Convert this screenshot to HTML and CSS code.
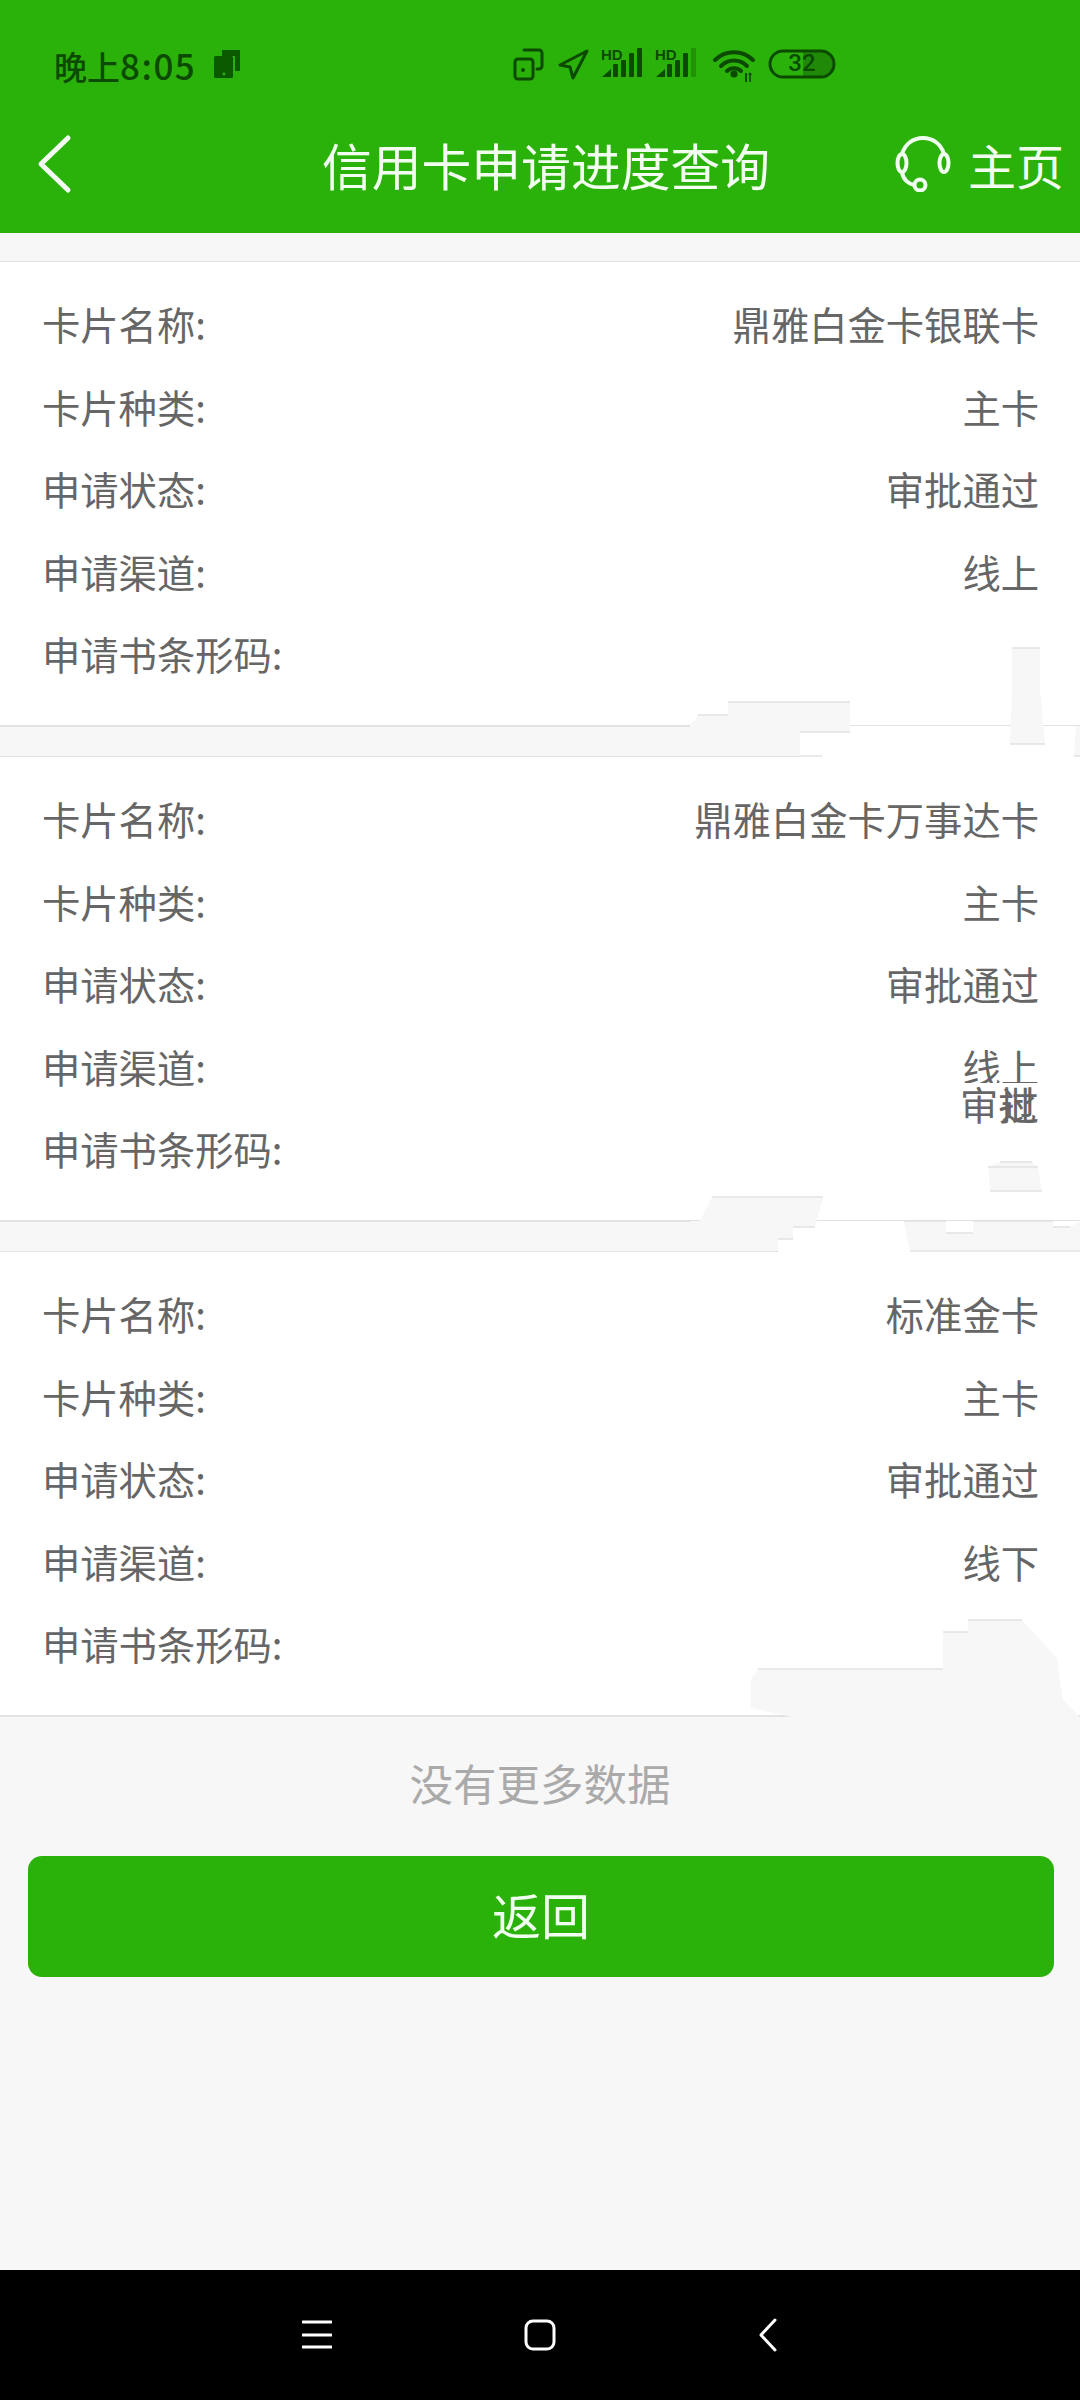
FILE: index.html
```html
<!DOCTYPE html>
<html lang="zh-CN">
    <head>
        <meta charset="UTF-8">
        <meta name="viewport" content="width=device-width, initial-scale=1.0">
        <title>信用卡申请进度查询</title>
        <link rel="stylesheet" href="styles.css">
    </head>
    <body>
        <div class="page">
            <header class="top">
                <div class="status">
                    <span class="time">晚上<span class="digits">8:05</span></span>
                    <svg class="status-left" width="28" height="30" viewBox="0 0 28 30">
                        <path d="M9 1h18v21h-5V7H9z" fill="#0b5a00"/>
                        <rect x="1" y="7" width="19" height="22" rx="1.5" fill="#0b5a00"/>
                        <circle cx="11" cy="25" r="1.4" fill="#2bb20a"/>
                    </svg>
                    <svg class="status-right" width="326" height="36" viewBox="512 46 326 36">
                        <g fill="none" stroke="#0b4a00" stroke-width="3" stroke-linejoin="round" stroke-linecap="round">
                            <rect x="514" y="59" width="18" height="20" rx="3"/>
                            <path d="M523 50h15a3 3 0 0 1 3 3v13a3 3 0 0 1-3 3h-2"/>
                            <path d="M586 51L559 65l10 2 3 11z"/>
                        </g>
                        <circle cx="522" cy="70" r="2" fill="#0b4a00"/>
                        <g fill="#0b4a00">
                            <text class="hd" x="600" y="60">HD</text>
                            <path d="M601 77l9-8v8z"/>
                            <rect x="612" y="64" width="5" height="13" rx="1"/>
                            <rect x="620" y="60" width="5" height="17" rx="1"/>
                            <rect x="628" y="53" width="5" height="24" rx="1"/>
                            <rect x="636" y="48" width="5" height="29" rx="1"/>
                            <text class="hd" x="654" y="60">HD</text>
                            <path d="M655 77l9-8v8z"/>
                            <rect x="666" y="64" width="5" height="13" rx="1"/>
                            <rect x="674" y="60" width="5" height="17" rx="1"/>
                            <rect x="682" y="53" width="5" height="24" rx="1"/>
                            <rect x="690" y="48" width="5" height="29" rx="1" opacity="0.3"/>
                            <circle cx="733" cy="74" r="3.6"/>
                            <path d="M744 73v9h2v-9zM749 72l-2 3h1.200v7h1.600v-7H751z"/>
                        </g>
                        <g fill="none" stroke="#0b4a00" stroke-width="4" stroke-linecap="round">
                            <path d="M714 60a27 27 0 0 1 38 0"/>
                            <path d="M720 66a18 18 0 0 1 26 0"/>
                            <path d="M726 71a10 10 0 0 1 14 0"/>
                        </g>
                        <path d="M802 52h18a12 12 0 0 1 0 24h-18z" fill="#1f8a08"/>
                        <rect x="769" y="51" width="64" height="26" rx="13" fill="none" stroke="#0b4a00" stroke-width="3"/>
                        <text class="batt" x="801" y="71">32</text>
                    </svg>
                </div>
                <div class="bar">
                    <svg class="back" width="38" height="60" viewBox="0 0 38 60">
                        <path d="M33 4L6 30l27 26" fill="none" stroke="#fff" stroke-width="5" stroke-linecap="round" stroke-linejoin="round" opacity="0.95"/>
                    </svg>
                    <h1 class="title">信用卡申请进度查询</h1>
                    <div class="home">
                        <svg width="56" height="56" viewBox="0 0 56 56">
                            <g fill="none" stroke="#f0fff0" stroke-width="4" stroke-linecap="round">
                                <path d="M7 18C10 8 18 2 28 2s18 6 21 16"/>
                                <ellipse cx="7" cy="27" rx="4.500" ry="9"/>
                                <ellipse cx="49" cy="27" rx="4.500" ry="9"/>
                                <path d="M7 36c1 8 7 12 12 13"/>
                                <circle cx="25" cy="49" r="5.500"/>
                            </g>
                        </svg>
                        <span>主页</span>
                    </div>
                </div>
            </header>

            <main class="list">
                <section class="card">
                    <div class="row"><span>卡片名称:</span><span>鼎雅白金卡银联卡</span></div>
                    <div class="row"><span>卡片种类:</span><span>主卡</span></div>
                    <div class="row"><span>申请状态:</span><span>审批通过</span></div>
                    <div class="row"><span>申请渠道:</span><span>线上</span></div>
                    <div class="row"><span>申请书条形码:</span></div>
                </section>
                <section class="card">
                    <div class="row"><span>卡片名称:</span><span>鼎雅白金卡万事达卡</span></div>
                    <div class="row"><span>卡片种类:</span><span>主卡</span></div>
                    <div class="row"><span>申请状态:</span><span>审批通过</span></div>
                    <div class="row"><span>申请渠道:</span><span>线上</span></div>
                    <div class="row"><span>申请书条形码:</span></div>
                    <div class="stray">审<span>批</span><span class="over">过</span></div>
                </section>
                <section class="card">
                    <div class="row"><span>卡片名称:</span><span>标准金卡</span></div>
                    <div class="row"><span>卡片种类:</span><span>主卡</span></div>
                    <div class="row"><span>申请状态:</span><span>审批通过</span></div>
                    <div class="row"><span>申请渠道:</span><span>线下</span></div>
                    <div class="row"><span>申请书条形码:</span></div>
                </section>
                <p class="nomore">没有更多数据</p>
                <button class="btn-back" type="button">返回</button>
            </main>

            <nav class="keys">
                <svg width="30" height="30" viewBox="0 0 30 30">
                    <path d="M1 2h28M1 15h28M1 27h28" stroke="#fff" stroke-width="3" stroke-linecap="round"/>
                </svg>
                <svg class="key-home" width="32" height="32" viewBox="0 0 32 32">
                    <rect x="2" y="2" width="28" height="28" rx="7" fill="none" stroke="#fff" stroke-width="3"/>
                </svg>
                <svg width="20" height="34" viewBox="0 0 20 34">
                    <path d="M17 2L3 17l14 15" fill="none" stroke="#fff" stroke-width="3" stroke-linecap="round" stroke-linejoin="round"/>
                </svg>
            </nav>

            <!-- smudges left where the barcodes were painted out -->
            <svg class="patches" width="1080" height="2400" viewBox="0 0 1080 2400">
                <rect class="w" x="800" y="726" width="280" height="32"/>
                <path class="g" d="M728 702H850V732H800V756H690V726L698 715H728z"/>
                <path class="g" d="M1076 726H1080V756H1074z"/>
                <path class="g" d="M1012 648H1040V690L1045 744H1010L1012 690z"/>
                <path class="l" d="M728 702H850M698 715H728M800 732H850M800 756H822M1012 648H1040M1010 744H1045M1074 756H1080"/>

                <rect class="w" x="778" y="1221" width="302" height="32"/>
                <path class="g" d="M712 1197H823L815 1227H793V1239H778V1251H690V1221H700z"/>
                <path class="g" d="M904 1221H946V1233H973V1221H1053V1227H1070L1080 1221V1251H910z"/>
                <path class="g" d="M1000 1162H1032L1038 1167L1042 1191H990L988 1167z"/>
                <path class="l" d="M712 1197H823M793 1227H815M778 1239H793M904 1221H946M946 1233H973M973 1221H1053M1053 1227H1070M910 1251H1080M1000 1162H1032M988 1167H1038M990 1191H1042"/>

                <path class="g" d="M758 1669H943V1632H968V1620H1022L1057 1658L1063 1700L1080 1717V1720H792V1717L751 1708V1680z"/>
                <path class="l" d="M758 1669H943M943 1632H968M968 1620H1022"/>
            </svg>
        </div>
    </body>
</html>
```

FILE: styles.css
```css
* { box-sizing: border-box; }
html, body { margin: 0; padding: 0; }
body { font-family: "Noto Sans CJK SC", "Noto Sans", sans-serif; }

.page { position: relative; display: flex; flex-direction: column; width: 1080px; height: 2400px; background: #f7f7f7; overflow: hidden; }

.top { height: 233px; background: #2bb20a; color: #fff; }
.status { display: flex; align-items: center; height: 80px; padding: 48px 241px 0 54px; }
.time { font-size: 33px; font-weight: 500; color: #0b4a00; }
.digits { font-size: 35px; letter-spacing: 1.5px; }
.status-left { margin-left: 17px; }
.status-right { margin-left: auto; }
.hd { font: bold 15px "Liberation Sans", sans-serif; }
.batt { font: 500 24px "Roboto", sans-serif; fill: #0b4a00; text-anchor: middle; }

.bar { display: flex; align-items: center; height: 153px; padding: 15px 16px 0 35px; }
.back { flex: none; }
.title { flex: 1; margin: 0; padding-left: 124px; font-size: 49.8px; font-weight: 400; line-height: 60px; text-align: center; white-space: nowrap; color: #f2fff0; }
.home { display: flex; align-items: center; gap: 17px; font-size: 48px; line-height: 60px; color: #f2fff0; }

.list { flex: 1; padding-top: 28px; }
.card { position: relative; height: 466px; margin-bottom: 29px; padding: 21px 41px 0 42px; background: #fff; border-top: 1px solid #e2e2e2; border-bottom: 2px solid #e2e2e2; }
.row { display: flex; justify-content: space-between; height: 82.5px; font-size: 38.3px; line-height: 82px; color: #666; }
.stray { position: absolute; top: 326px; right: 40px; width: 80px; height: 42px; font-size: 38.3px; line-height: 42px; white-space: nowrap; background: #fff; color: #666; }
.stray .over { margin-left: -36px; }

.nomore { margin: -29px 0 0; height: 139px; padding-top: 36px; font-size: 43.5px; line-height: 60px; text-align: center; color: #aaa; }
.btn-back { display: block; width: 1026px; height: 121px; margin: 0 0 0 28px; padding: 0 0 6px; border: 0; border-radius: 14px; background: #2bb20a; font-family: inherit; font-size: 49px; color: #f0fff0; }

.keys { display: flex; align-items: center; height: 130px; padding: 0 0 0 302px; background: #000; }
.key-home { margin: 0 202px 0 192px; }

.patches { position: absolute; top: 0; left: 0; pointer-events: none; }
.patches .w { fill: #fff; }
.patches .g { fill: #f7f7f7; }
.patches .l { fill: none; stroke: #e2e2e2; stroke-width: 1.5; }
```
